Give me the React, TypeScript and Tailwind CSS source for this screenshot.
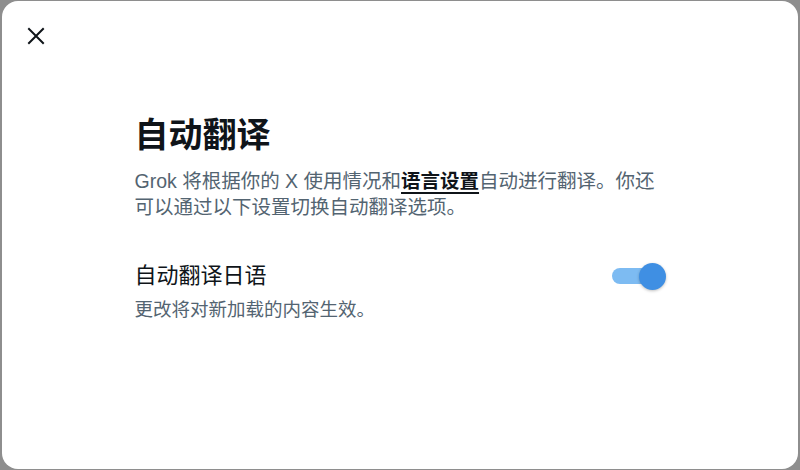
import React from "react";

const font = { fontFamily: '"Liberation Sans", "Noto Sans CJK SC", sans-serif' };

function Toggle() {
  return (
    <div className="relative w-[54px] h-[28px] flex items-center">
      <div className="w-[46px] h-[16px] rounded-full bg-[#7dbbf2]" />
      <div className="absolute right-0 top-[1px] w-[27px] h-[27px] rounded-full bg-[#3f8fe3] shadow-[0_1px_3px_rgba(0,0,0,0.25)]" />
    </div>
  );
}

export default function App() {
  return (
    <div className="w-[800px] h-[470px] bg-[#8e8e8e] pt-[1px] pb-[1px] pl-[2px] pr-[2px]" style={font}>
      <div className="h-full bg-white rounded-[16px] flex flex-col">
        {/* Header */}
        <div className="pl-[16px] pt-[17px]">
          <button className="w-[36px] h-[36px] flex items-center justify-center text-[#0f1419]">
            <svg width="18" height="18" viewBox="0 0 18 18" fill="none" stroke="currentColor" strokeWidth="2" strokeLinecap="square">
              <path d="M2 2L16 16M16 2L2 16" />
            </svg>
          </button>
        </div>

        {/* Body */}
        <div className="w-[531px] mx-auto mt-[61px]">
          <h1 className="text-[34px] leading-[40px] font-bold text-[#0f1419]">自动翻译</h1>
          <p className="mt-[13px] text-[19.5px] leading-[26px] text-[#536471]">
            <span>Grok 将根据你的 X 使用情况和</span>
            <span className="font-bold text-[#0f1419] underline underline-offset-[4px] decoration-[1.5px]">语言设置</span>
            <span>自动进行翻译。你还</span>
            <br />
            <span>可以通过以下设置切换自动翻译选项。</span>
          </p>

          <div className="mt-[42px] flex items-center justify-between">
            <span className="text-[22px] leading-[28px] text-[#0f1419]">自动翻译日语</span>
            <Toggle />
          </div>
          <p className="mt-[8px] text-[18.5px] leading-[24px] text-[#536471]">更改将对新加载的内容生效。</p>
        </div>
      </div>
    </div>
  );
}
